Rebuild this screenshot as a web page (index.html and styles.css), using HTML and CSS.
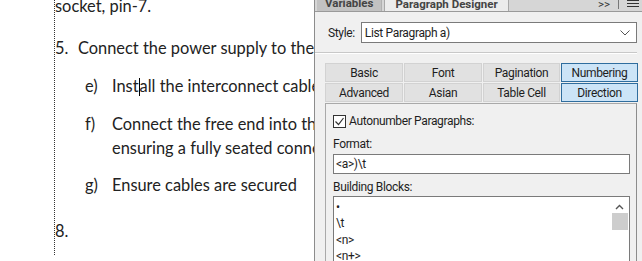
FILE: index.html
```html
<!DOCTYPE html>
<html lang="en">
<head>
    <meta charset="UTF-8">
    <title>Paragraph Designer</title>
    <link rel="stylesheet" href="styles.css">
</head>
<body>
<div class="app">
    <div class="doc">
        <div class="page">
            <p class="para first">socket, pin-7.</p>
            <p class="para"><span class="num">5.</span>Connect the power supply to the main unit</p>
            <p class="sub"><span class="num">e)</span>Inst<span class="caret"></span>all the interconnect cable</p>
            <p class="sub"><span class="num">f)</span>Connect the free end into the<br>ensuring a fully seated connection</p>
            <p class="sub g"><span class="num">g)</span>Ensure cables are secured</p>
            <p class="para last"><span class="num">8.</span></p>
        </div>
    </div>

    <aside class="panel">
        <div class="tabbar">
            <span class="ptab">Variables</span>
            <span class="ptab active">Paragraph Designer</span>
            <span class="tabbar-tools">
                <span class="more">&gt;&gt;</span>
                <span class="sep"></span>
                <svg class="menu" width="12" height="9" viewBox="0 0 12 9"><path d="M0 1.5h12M0 4.5h12M0 7.5h12" stroke="#333" stroke-width="1"/></svg>
            </span>
        </div>

        <div class="style-row">
            <label>Style:</label>
            <div class="select">
                <span>List Paragraph a)</span>
                <svg width="10" height="6" viewBox="0 0 10 6"><path d="M0.5 0.5l4.5 4.5 4.5-4.5" fill="none" stroke="#555" stroke-width="1"/></svg>
            </div>
        </div>

        <div class="divider"></div>

        <div class="body">
            <div class="props">
                <button class="prop">Basic</button>
                <button class="prop">Font</button>
                <button class="prop">Pagination</button>
                <button class="prop on">Numbering</button>
                <button class="prop">Advanced</button>
                <button class="prop">Asian</button>
                <button class="prop">Table Cell</button>
                <button class="prop on">Direction</button>
            </div>

            <div class="sheet">
                <label class="check">
                    <span class="box">
                        <svg width="11" height="11" viewBox="0 0 11 11"><path d="M1.5 5.5l3 3 5-6.5" fill="none" stroke="#333" stroke-width="1.2"/></svg>
                    </span>
                    Autonumber Paragraphs:
                </label>

                <div class="field-label">Format:</div>
                <div class="input">&lt;a&gt;)\t</div>

                <div class="field-label blocks">Building Blocks:</div>
                <div class="list">
                    <ul>
                        <li>•</li>
                        <li>\t</li>
                        <li>&lt;n&gt;</li>
                        <li>&lt;n+&gt;</li>
                    </ul>
                    <div class="scroll">
                        <svg width="9" height="6" viewBox="0 0 9 6"><path d="M1 5l3.5-3.5 3.5 3.5" fill="none" stroke="#555" stroke-width="1.4"/></svg>
                        <div class="thumb"></div>
                    </div>
                </div>
            </div>
        </div>
    </aside>
</div>
</body>
</html>
```

FILE: styles.css
```css
body {
    margin: 0;
    padding: 0;
    background-color: #fff;
    overflow: hidden;
}

.app {
    display: grid;
    grid-template-columns: 314px 328px;
    width: 642px;
    height: 261px;
    overflow: hidden;
}

/* document side */

.doc {
    background-color: #fff;
    overflow: hidden;
    padding-left: 54px;
}

.page {
    height: 100%;
    border-left: 1px dotted #333;
    font-family: Lato, "Open Sans", sans-serif;
    font-size: 16.4px;
    color: #222;
    white-space: nowrap;
}

.page p {
    margin: 14px 0 0;
    line-height: 24px;
}

.para .num {
    display: inline-block;
    width: 23px;
}

.para.first {
    margin-top: -6px;
}

.page .para + .para {
    margin-top: 18px;
}

.page .para.last {
    margin-top: 22px;
}

.sub {
    padding-left: 57px;
    text-indent: -27px;
}

.sub .num {
    display: inline-block;
    width: 27px;
    text-indent: 0;
}

.sub.g {
    margin-top: 13px;
}

.caret {
    display: inline-block;
    width: 1px;
    height: 18px;
    background-color: #000;
    vertical-align: -4px;
}

/* panel */

.panel {
    background-color: #f0f0f0;
    border-left: 1px solid #8c8c8c;
    font-family: Roboto, "Liberation Sans", sans-serif;
    font-size: 12px;
    letter-spacing: -0.35px;
    color: #1e1e1e;
    display: flex;
    flex-direction: column;
    overflow: hidden;
}

.tabbar {
    height: 15px;
    margin-top: -4px;
    display: flex;
    align-items: stretch;
    background-color: #d6d6d6;
    border-bottom: 1px solid #9a9a9a;
    padding-left: 2px;
    font-weight: bold;
    font-size: 11.5px;
    letter-spacing: 0;
    color: #444;
}

.ptab {
    padding: 0 8px;
    line-height: 14px;
    background-color: #c2c2c2;
    border-right: 1px solid #b0b0b0;
}

.ptab.active {
    background-color: #ececec;
    margin-left: 2px;
    border: 1px solid #a8a8a8;
    border-bottom: none;
    padding: 0 10px;
}

.tabbar-tools {
    margin-left: auto;
    display: flex;
    align-items: center;
    gap: 8px;
    padding-right: 3px;
    font-weight: normal;
    color: #333;
}

.sep {
    width: 1px;
    height: 10px;
    background-color: #777;
}

.style-row {
    display: flex;
    align-items: center;
    gap: 6px;
    padding: 10px 5px 0 13px;
    height: 22px;
}

.select {
    flex: 1;
    height: 19px;
    display: flex;
    align-items: center;
    justify-content: space-between;
    background-color: #fff;
    border: 1px solid #7a7a7a;
    padding: 0 6px 0 3px;
}

.divider {
    margin: 9px 5px 0 0;
    border-top: 1px solid #c8c8c8;
    border-bottom: 1px solid #fff;
}

.body {
    padding: 9px 5px 0 10px;
}

.props {
    display: grid;
    grid-template-columns: 78px 78px 77px 77px;
    gap: 1px;
}

.prop {
    font-family: Roboto, "Liberation Sans", sans-serif;
    font-size: 12px;
    letter-spacing: -0.35px;
    color: #1e1e1e;
    height: 19px;
    padding: 0;
    background-color: #e1e1e1;
    border: 1px solid #d2d2d2;
    line-height: 16px;
}

.prop.on {
    background-color: #cce4f7;
    border-color: #2f6d9e;
}

.sheet {
    margin-top: 1px;
    height: 160px;
    border: 1px solid #a9a9a9;
    border-right-color: #8c8c8c;
    padding: 9px 6px 0 7px;
}

.check {
    display: flex;
    align-items: center;
    gap: 3px;
    height: 16px;
}

.box {
    width: 11px;
    height: 11px;
    border: 1px solid #333;
    background-color: #fff;
    display: flex;
}

.field-label {
    margin-top: 8px;
    line-height: 15px;
}

.field-label.blocks {
    margin-top: 6px;
}

.input {
    height: 18px;
    line-height: 18px;
    background-color: #fff;
    border: 1px solid #7a7a7a;
    padding-left: 2px;
    margin-top: 2px;
}

.list {
    margin-top: 1px;
    height: 80px;
    background-color: #fff;
    border: 1px solid #7a7a7a;
    display: flex;
}

.list ul {
    list-style: none;
    margin: 0;
    padding: 2px 0 0 2px;
    flex: 1;
}

.list li {
    line-height: 16.3px;
}

.scroll {
    width: 17px;
    padding-top: 7px;
    display: flex;
    flex-direction: column;
    align-items: center;
    gap: 3px;
    margin-right: 1px;
}

.thumb {
    width: 16px;
    height: 17px;
    background-color: #cdcdcd;
}
```
